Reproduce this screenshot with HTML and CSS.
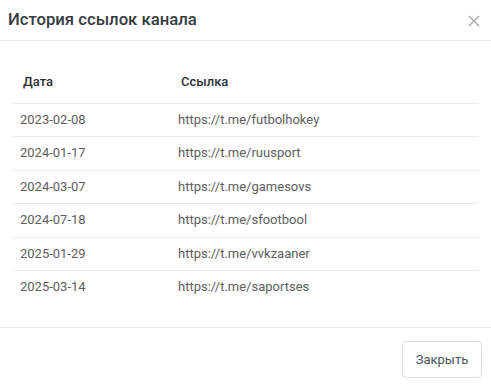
FILE: index.html
```html
<!DOCTYPE html>
<html lang="ru">
	<head>
		<meta charset="UTF-8" />
		<meta name="viewport" content="width=device-width, initial-scale=1.0" />
		<title>История ссылок канала</title>
		<link rel="stylesheet" href="styles.css">
	</head>
	<body>
		<div class="modal">
			<div class="modal-header">
				<h5 class="modal-title">История ссылок канала</h5>
				<button class="close" type="button" aria-label="Закрыть">
					<svg width="12" height="12" viewBox="0 0 12 12">
						<path d="M1 1L11 11M11 1L1 11" stroke="#a8a8a8" stroke-width="1.4" />
					</svg>
				</button>
			</div>
			<div class="modal-body">
				<table class="links">
					<thead>
						<tr>
							<th class="col-date">Дата</th>
							<th>Ссылка</th>
						</tr>
					</thead>
					<tbody>
						<tr><td>2023-02-08</td><td>https://t.me/futbolhokey</td></tr>
						<tr><td>2024-01-17</td><td>https://t.me/ruusport</td></tr>
						<tr><td>2024-03-07</td><td>https://t.me/gamesovs</td></tr>
						<tr><td>2024-07-18</td><td>https://t.me/sfootbool</td></tr>
						<tr><td>2025-01-29</td><td>https://t.me/vvkzaaner</td></tr>
						<tr><td>2025-03-14</td><td>https://t.me/saportses</td></tr>
					</tbody>
				</table>
			</div>
			<div class="modal-footer">
				<button class="btn" type="button">Закрыть</button>
			</div>
		</div>
	</body>
</html>
```

FILE: styles.css
```css
*,
*::before,
*::after {
	box-sizing: border-box;
}
body {
	margin: 0;
	background-color: #ffffff;
	color: #212529;
	font-family: Roboto, 'Liberation Sans', sans-serif;
}
.modal {
	width: 491px;
	height: 391px;
	display: flex;
	flex-direction: column;
}
.modal-header {
	display: flex;
	align-items: center;
	justify-content: space-between;
	height: 41px;
	padding: 0 11px 2px 8px;
	border-bottom: 1px solid #e9ecef;
}
.modal-title {
	margin: 0;
	font-size: 16.7px;
	font-weight: 500;
	color: #343a40;
}
.close {
	display: flex;
	padding: 0;
	border: 0;
	background: none;
	margin-top: 4px;
}
.modal-body {
	flex-grow: 1;
	padding: 22px 12px 0 13px;
	border-bottom: 1px solid #e9ecef;
}
.links {
	width: 100%;
	border-collapse: collapse;
	font-size: 13px;
}
.links th {
	text-align: left;
	font-weight: 500;
	color: #2b2f33;
	padding: 10px 10px 13px;
	line-height: 17px;
}
.links .col-date {
	width: 158px;
}
.links td {
	padding: 8px 7px;
	line-height: 16.4px;
	color: #5e5e5e;
	border-top: 1px solid #e9ecef;
}
.modal-footer {
	display: flex;
	justify-content: flex-end;
	padding: 13px 9px 13px;
}
.btn {
	width: 80px;
	height: 37px;
	border: 1px solid #dcdfe3;
	border-radius: 4px;
	background: #ffffff;
	color: #4a5360;
	font-family: Roboto, 'Liberation Sans', sans-serif;
	font-size: 13px;
}
```
